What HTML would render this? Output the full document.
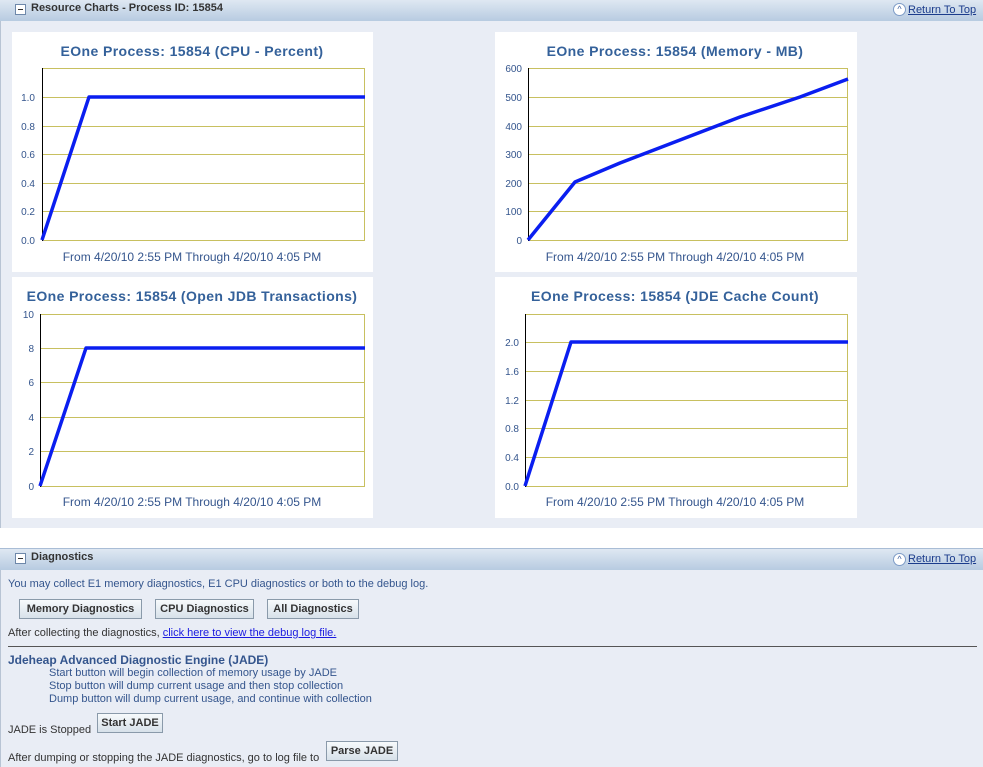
<!DOCTYPE html>
<html><head><meta charset="utf-8"><style>
body{margin:0;width:983px;height:767px;overflow:hidden;background:#fff;font-family:"Liberation Sans",sans-serif;position:relative}
.abs{position:absolute}
.hdr{position:absolute;left:0;width:983px;height:21px;background:linear-gradient(#dfe8f2,#b7cbe1);border-top:1px solid #a9bdd6;}
.hdr .t{position:absolute;left:31px;top:2px;font-size:11px;font-weight:bold;color:#333}
.hdr .m{position:absolute;left:15px;top:4px;width:9px;height:9px;border:1px solid #6e88aa;background:#fff;}
.hdr .m:after{content:"";position:absolute;left:2px;top:4px;width:5px;height:1px;background:#333}
.hdr .r{position:absolute;left:908px;top:4px;font-size:11px;color:#1b3c8c;text-decoration:underline}
.hdr .c{position:absolute;left:893px;top:3px;width:11px;height:11px;border-radius:50%;border:1px solid #7e9cc7;background:#fff;font-size:9px;color:#3c5fa0;text-align:center;line-height:11px}
.btn{position:absolute;height:18px;border:1px solid #8a9aaa;background:linear-gradient(#f7fafc,#d7e1ea);font-size:11px;font-weight:bold;color:#333;text-align:center;line-height:19px}
.tx{position:absolute;font-size:11px;color:#333;white-space:nowrap}
.bl{color:#34558d}
</style></head><body>
<div class="abs" style="left:0;top:20px;width:983px;height:508px;background:#e9edf5;border-left:1px solid #b8c4d4;box-sizing:border-box"></div>
<div class="hdr" style="top:-1px"><div class="m"></div><div class="t">Resource Charts - Process ID: 15854</div><div class="c">^</div><div class="r">Return To Top</div></div>
<svg class="abs" style="left:0;top:0" width="983" height="528" font-family="Liberation Sans, sans-serif">
<g fill="#fff"><rect x="12" y="32" width="361" height="240"/><rect x="495" y="32" width="362" height="240"/><rect x="12" y="277" width="361" height="241"/><rect x="495" y="277" width="362" height="241"/></g>
<g font-size="14" font-weight="bold" fill="#34619a" text-anchor="middle" letter-spacing="0.4">
<text x="192" y="56">EOne Process: 15854 (CPU - Percent)</text>
<text x="675" y="56">EOne Process: 15854 (Memory - MB)</text>
<text x="192" y="301">EOne Process: 15854 (Open JDB Transactions)</text>
<text x="675" y="301">EOne Process: 15854 (JDE Cache Count)</text></g>
<g font-size="12" fill="#34558d" text-anchor="middle">
<text x="192" y="261">From 4/20/10 2:55 PM Through 4/20/10 4:05 PM</text>
<text x="675" y="261">From 4/20/10 2:55 PM Through 4/20/10 4:05 PM</text>
<text x="192" y="506">From 4/20/10 2:55 PM Through 4/20/10 4:05 PM</text>
<text x="675" y="506">From 4/20/10 2:55 PM Through 4/20/10 4:05 PM</text></g>
<g stroke="#c8c060" stroke-width="1" fill="none">
<rect x="42.5" y="68.5" width="322" height="172"/>
<path d="M42 97.5H365M42 126.5H365M42 154.5H365M42 183.5H365M42 211.5H365"/>
<rect x="528.5" y="68.5" width="319" height="172"/>
<path d="M528 97.5H848M528 126.5H848M528 154.5H848M528 183.5H848M528 211.5H848"/>
<rect x="40.5" y="314.5" width="324" height="172"/>
<path d="M40 348.5H365M40 382.5H365M40 417.5H365M40 451.5H365"/>
<rect x="525.5" y="314.5" width="322" height="172"/>
<path d="M525 342.5H848M525 371.5H848M525 400.5H848M525 428.5H848M525 457.5H848"/>
</g>
<g stroke="#000" stroke-width="1"><path d="M42.5 68V241M528.5 68V241M40.5 314V487M525.5 314V487"/></g>
<g font-size="10" fill="#34558d" text-anchor="end">
<text x="35" y="244">0.0</text><text x="35" y="215">0.2</text><text x="35" y="187">0.4</text><text x="35" y="158">0.6</text><text x="35" y="130">0.8</text><text x="35" y="101">1.0</text>
<text x="522" y="244">0</text><text x="522" y="215">100</text><text x="522" y="187">200</text><text x="522" y="158">300</text><text x="522" y="130">400</text><text x="522" y="101">500</text><text x="522" y="72">600</text>
<text x="34" y="490">0</text><text x="34" y="455">2</text><text x="34" y="421">4</text><text x="34" y="386">6</text><text x="34" y="352">8</text><text x="34" y="318">10</text>
<text x="519" y="490">0.0</text><text x="519" y="461">0.4</text><text x="519" y="432">0.8</text><text x="519" y="404">1.2</text><text x="519" y="375">1.6</text><text x="519" y="346">2.0</text></g>
<g stroke="#0a1ef0" stroke-width="3.5" fill="none" stroke-linejoin="round">
<path d="M42 240L89 97H365"/>
<path d="M528 240L575 182L620 163L680 140L740 117L800 97L848 79"/>
<path d="M40 486L86 348H365"/>
<path d="M525 486L571 342H848"/></g>
</svg>
<div class="abs" style="left:0;top:568px;width:983px;height:199px;background:#e9edf5;border-left:1px solid #b8c4d4;box-sizing:border-box"></div>
<div class="hdr" style="top:548px"><div class="m"></div><div class="t">Diagnostics</div><div class="c" style="top:4px">^</div><div class="r" style="top:4px">Return To Top</div></div>
<div class="tx bl" style="left:8px;top:578px">You may collect E1 memory diagnostics, E1 CPU diagnostics or both to the debug log.</div>
<div class="btn" style="left:19px;top:599px;width:121px">Memory Diagnostics</div>
<div class="btn" style="left:155px;top:599px;width:97px">CPU Diagnostics</div>
<div class="btn" style="left:267px;top:599px;width:90px">All Diagnostics</div>
<div class="tx" style="left:8px;top:627px">After collecting the diagnostics, <span style="color:#1a1ae0;text-decoration:underline">click here to view the debug log file.</span></div>
<div class="abs" style="left:8px;top:646px;width:969px;height:1px;background:#555"></div>
<div class="tx" style="left:8px;top:653px;font-size:12px;font-weight:bold;color:#34558d">Jdeheap Advanced Diagnostic Engine (JADE)</div>
<div class="tx bl" style="left:49px;top:667px">Start button will begin collection of memory usage by JADE</div>
<div class="tx bl" style="left:49px;top:680px">Stop button will dump current usage and then stop collection</div>
<div class="tx bl" style="left:49px;top:693px">Dump button will dump current usage, and continue with collection</div>
<div class="tx" style="left:8px;top:724px">JADE is Stopped</div>
<div class="btn" style="left:97px;top:713px;width:64px">Start JADE</div>
<div class="tx" style="left:8px;top:752px">After dumping or stopping the JADE diagnostics, go to log file to</div>
<div class="btn" style="left:326px;top:741px;width:70px">Parse JADE</div>
</body></html>
